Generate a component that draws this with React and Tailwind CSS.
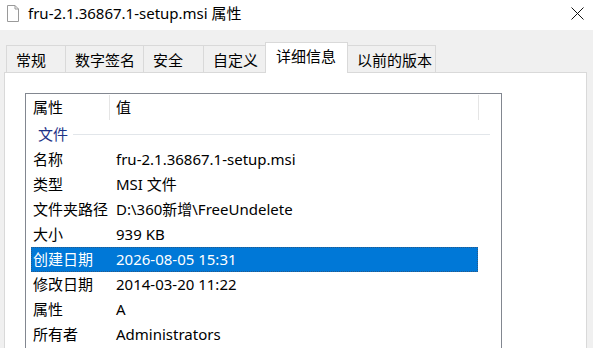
import React from "react";

const FONT = { fontFamily: '"Noto Sans", "Noto Sans CJK SC", sans-serif' };

const tabs = [
  { label: "常规", w: "w-[60px]" },
  { label: "数字签名", w: "w-[79px]" },
  { label: "安全", w: "w-[61px]" },
  { label: "自定义", w: "w-[63px]" },
  { label: "详细信息", w: "w-[83px]", active: true },
  { label: "以前的版本", w: "w-[89px]" },
];

const rows = [
  ["名称", "fru-2.1.36867.1-setup.msi"],
  ["类型", "MSI 文件"],
  ["文件夹路径", "D:\\360新增\\FreeUndelete"],
  ["大小", "939 KB"],
  ["创建日期", "2026-08-05 15:31", true],
  ["修改日期", "2014-03-20 11:22"],
  ["属性", "A"],
  ["所有者", "Administrators"],
];

function FileIcon() {
  return (
    <svg width="12" height="17" viewBox="0 0 12 17" className="block">
      <path d="M0.5 0.5 H8 L11.5 4 V16.5 H0.5 Z" fill="#fff" stroke="#9a9a9a" />
      <path d="M8 0.5 V4 H11.5" fill="none" stroke="#9a9a9a" />
    </svg>
  );
}

export default function App() {
  return (
    <div
      className="w-[593px] h-[348px] overflow-hidden bg-[#f0f0f0] text-black text-[15px] leading-none"
      style={FONT}
    >
      {/* title bar */}
      <div className="h-[30px] bg-white flex items-center relative">
        <div className="ml-[7px] mt-[-3px]">
          <FileIcon />
        </div>
        <div className="ml-[9px] mt-[-4px] text-[15px]">fru-2.1.36867.1-setup.msi 属性</div>
        <svg
          width="13"
          height="13"
          viewBox="0 0 13 13"
          className="absolute left-[571px] top-[7px]"
        >
          <path d="M0.5 0.5 L12.5 12.5 M12.5 0.5 L0.5 12.5" stroke="#111" strokeWidth="1" />
        </svg>
      </div>

      {/* tabs */}
      <div className="pt-[12px] pl-[6px] flex items-end h-[42px] relative z-10">
        {tabs.map((t, i) =>
          t.active ? (
            <div
              key={i}
              className={`${t.w} h-[31px] bg-white border border-b-0 border-[#d9d9d9] -ml-px flex items-center pl-[10px] pb-[3px] -mb-px`}
            >
              {t.label}
            </div>
          ) : (
            <div
              key={i}
              className={`${t.w} h-[27px] border border-b-0 border-[#d9d9d9] ${i === 0 ? "" : "-ml-px"} flex items-center pl-[9px] pt-[2px]`}
            >
              {t.label}
            </div>
          )
        )}
      </div>

      {/* panel */}
      <div className="ml-[4px] w-[583px] h-[300px] bg-white border border-[#d9d9d9] pt-[20px] pl-[20px]">
        <div className="w-[477px] h-[300px] border border-[#828790] bg-white">
          {/* header */}
          <div className="h-[27px] flex items-center relative">
            <div className="pl-[7px] w-[83px]">属性</div>
            <div className="w-px h-[25px] bg-[#e5e5e5] self-start mt-px" />
            <div className="pl-[6px] flex-1">值</div>
            <div className="w-px h-[25px] bg-[#e5e5e5] self-start mt-px mr-[22px]" />
          </div>
          {/* group */}
          <div className="h-[26px] flex items-center pl-[12px] pr-[11px]">
            <span className="text-[#1e3287]">文件</span>
            <div className="flex-1 h-px bg-[#e2e6ea] ml-[5px]" />
          </div>
          {/* rows */}
          <div className="pl-[5px] pr-[23px]">
            {rows.map(([k, v, sel], i) => (
              <div
                key={i}
                className={`h-[25px] flex items-center ${
                  sel
                    ? "bg-[#0078d7] text-white border border-dotted border-[#2a5a88]"
                    : "border border-transparent"
                }`}
              >
                <div className="w-[84px] pl-px">{k}</div>
                <div>{v}</div>
              </div>
            ))}
          </div>
        </div>
      </div>
    </div>
  );
}
